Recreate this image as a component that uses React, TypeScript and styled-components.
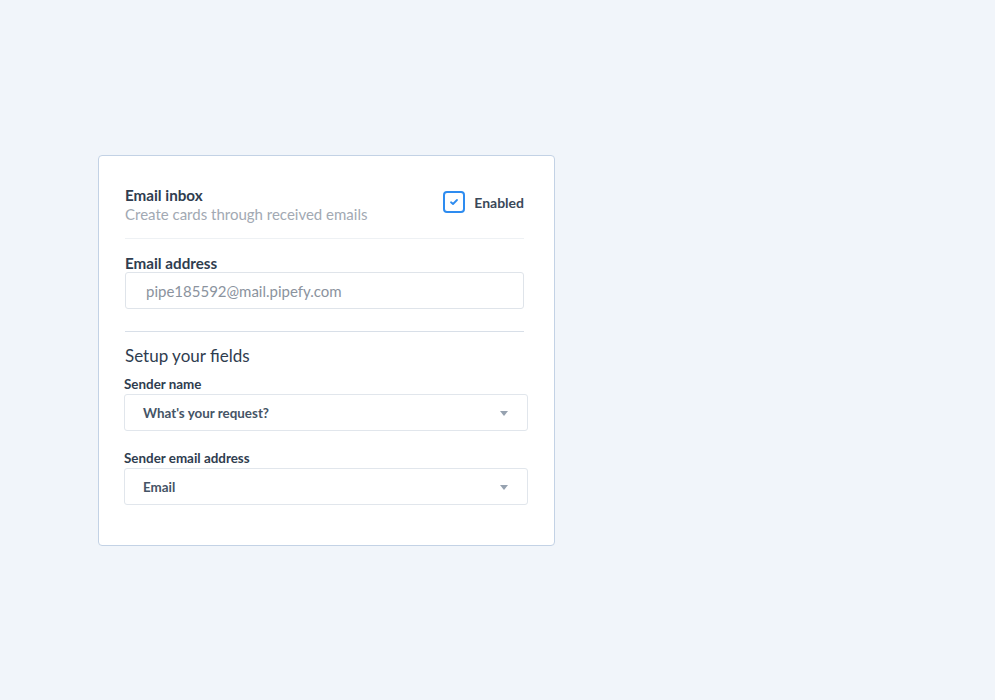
import React from 'react';
import styled, { createGlobalStyle } from 'styled-components';

const GlobalStyle = createGlobalStyle`
    html, body {
        margin: 0;
        padding: 0;
        background: #f1f5fa;
        font-family: Lato, "Open Sans", sans-serif;
        -webkit-font-smoothing: antialiased;
    }
`;

const Page = styled.div`
    min-height: 700px;
    padding: 155px 0 0 98px;
    box-sizing: border-box;
`;

const Card = styled.div`
    width: 457px;
    height: 391px;
    box-sizing: border-box;
    background: #fff;
    border: 1px solid #c3d2e5;
    border-radius: 4px;
    padding: 30px 30px 0 26px;
`;

const HeaderRow = styled.div`
    display: flex;
    justify-content: space-between;
    align-items: flex-start;
    padding-bottom: 14px;
    border-bottom: 1px solid #eef1f4;
`;

const Title = styled.div`
    font-size: 15.2px;
    font-weight: 700;
    line-height: 18px;
    color: #2f3d4f;
`;

const Subtitle = styled.div`
    font-size: 15px;
    line-height: 20px;
    color: #a2a9b3;
`;

const Toggle = styled.label`
    display: flex;
    align-items: center;
    gap: 9px;
    margin-top: 5px;
    font-size: 14px;
    font-weight: 700;
    color: #3a4859;
`;

const CheckBox = styled.span`
    width: 22px;
    height: 22px;
    box-sizing: border-box;
    border: 2px solid #2e8cf0;
    border-radius: 4px;
    display: flex;
    align-items: center;
    justify-content: center;
`;

const Label = styled.div<{ $small?: boolean }>`
    font-size: ${p => (p.$small ? '13.4px' : '15.2px')};
    font-weight: 700;
    line-height: 16px;
    color: #2f3d4f;
    margin-bottom: ${p => (p.$small ? '2px' : '1px')};
`;

const AddressBlock = styled.div`
    padding: 16px 0 22px;
    border-bottom: 1px solid #d8dfe8;
`;

const TextInput = styled.div`
    height: 37px;
    box-sizing: border-box;
    border: 1px solid #dfe4ea;
    border-radius: 3px;
    display: flex;
    align-items: center;
    padding-left: 20px;
    font-size: 15px;
    color: #8b939e;
`;

const SectionTitle = styled.div`
    font-size: 17px;
    line-height: 20px;
    color: #2f3d4f;
    margin: 14px 0 10px;
`;

const Fields = styled.div`
    display: flex;
    flex-direction: column;
    gap: 19px;
    margin: 0 -4px 0 -1px;
`;

const Select = styled.div`
    height: 37px;
    box-sizing: border-box;
    border: 1px solid #e1e6ec;
    border-radius: 3px;
    display: flex;
    align-items: center;
    justify-content: space-between;
    padding: 0 19px 0 18px;
    font-size: 13.4px;
    font-weight: 700;
    color: #455466;
`;

const Caret = styled.span`
    width: 0;
    height: 0;
    border-left: 4px solid transparent;
    border-right: 4px solid transparent;
    border-top: 5px solid #96a2b0;
    margin-top: 2px;
`;

const fields = [
    { label: 'Sender name', value: "What's your request?" },
    { label: 'Sender email address', value: 'Email' },
];

const App: React.FC = () => {
    return (
        <>
            <GlobalStyle />
            <Page>
                <Card>
                    <HeaderRow>
                        <div>
                            <Title>Email inbox</Title>
                            <Subtitle>Create cards through received emails</Subtitle>
                        </div>
                        <Toggle>
                            <CheckBox>
                                <svg width="10" height="8" viewBox="0 0 10 8">
                                    <path d="M2 4.3 L4 6 L8 2" fill="none" stroke="#2e8cf0" strokeWidth="1.8" strokeLinecap="round" strokeLinejoin="round" />
                                </svg>
                            </CheckBox>
                            Enabled
                        </Toggle>
                    </HeaderRow>

                    <AddressBlock>
                        <Label>Email address</Label>
                        <TextInput>pipe185592@mail.pipefy.com</TextInput>
                    </AddressBlock>

                    <SectionTitle>Setup your fields</SectionTitle>
                    <Fields>
                        {fields.map(f => (
                            <div key={f.label}>
                                <Label $small>{f.label}</Label>
                                <Select>
                                    {f.value}
                                    <Caret />
                                </Select>
                            </div>
                        ))}
                    </Fields>
                </Card>
            </Page>
        </>
    );
};

export default App;
